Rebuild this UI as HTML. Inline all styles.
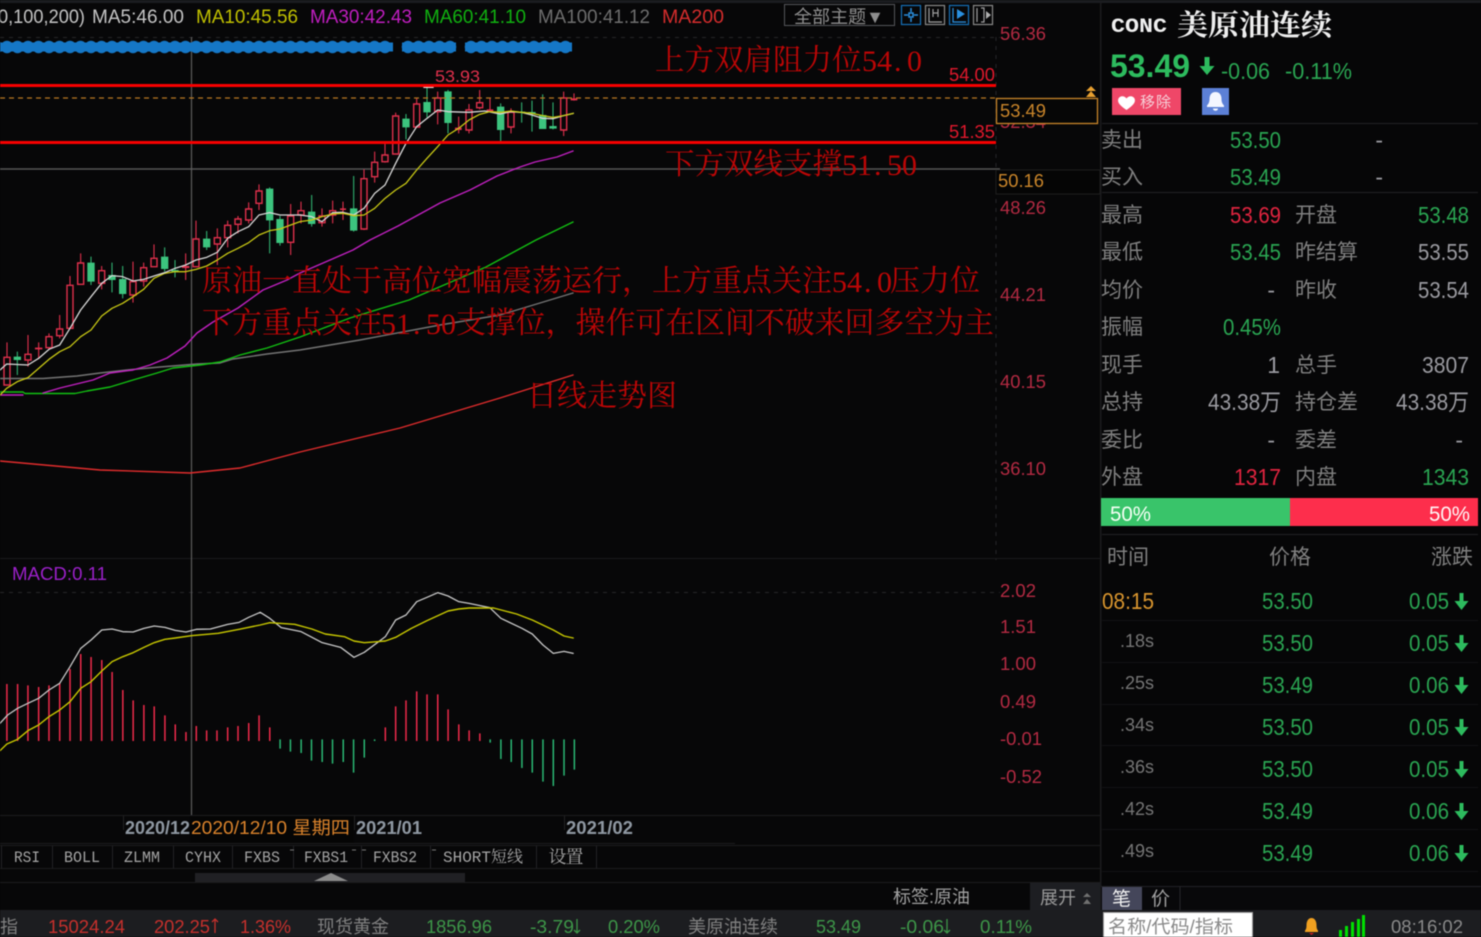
<!DOCTYPE html>
<html><head><meta charset="utf-8"><title>CONC</title>
<style>
html,body{margin:0;padding:0;background:#070708;width:1481px;height:937px;overflow:hidden}
svg{display:block;filter:blur(.4px)}
text{font-family:"Liberation Sans","Noto Sans CJK SC",sans-serif;white-space:pre}
.s{font-family:"Noto Serif CJK SC",serif;fill:#bb0606;font-size:29.5px}
.m{font-family:"Liberation Serif",serif;fill:#bb0606;font-size:30px}
.ax{font-size:18px;fill:#b32a42}
.rl{font-size:21px;fill:#7f7f7f}
.rv{font-size:23px;text-anchor:end}
.g{fill:#2aa552}.r{fill:#e0243f}.w{fill:#9a9aa0}
.tb{font-family:"Liberation Mono","Noto Serif CJK SC",monospace;font-size:16px;fill:#a5a5a5;text-anchor:middle}
.st{font-size:18px}
.hd{font-size:19px}
.nl{fill:none;stroke-linejoin:round;stroke-linecap:round}
.ns{vector-effect:non-scaling-stroke}
</style></head><body>
<svg width="1481" height="937" viewBox="0 0 1481 937" xmlns="http://www.w3.org/2000/svg">
<rect width="1481" height="937" fill="#070708"/>
<rect width="1481" height="3" fill="#1b1c20"/>

<!-- header legend -->
<text class="hd" x="-2" y="23" fill="#c4c4c4" textLength="87" lengthAdjust="spacingAndGlyphs">0,100,200)</text>
<text class="hd" x="92" y="23" fill="#c4c4c4" textLength="92" lengthAdjust="spacingAndGlyphs">MA5:46.00</text>
<text class="hd" x="196" y="23" fill="#c0c000" textLength="102" lengthAdjust="spacingAndGlyphs">MA10:45.56</text>
<text class="hd" x="310" y="23" fill="#c01ec0" textLength="102" lengthAdjust="spacingAndGlyphs">MA30:42.43</text>
<text class="hd" x="424" y="23" fill="#10b010" textLength="102" lengthAdjust="spacingAndGlyphs">MA60:41.10</text>
<text class="hd" x="538" y="23" fill="#6e6e6e" textLength="112" lengthAdjust="spacingAndGlyphs">MA100:41.12</text>
<text class="hd" x="662" y="23" fill="#d42c2c" textLength="62" lengthAdjust="spacingAndGlyphs">MA200</text>

<rect x="784.5" y="4.5" width="110" height="21" fill="none" stroke="#55565a"/>
<text x="794" y="23" font-size="18" fill="#8e8e8e" textLength="90" lengthAdjust="spacingAndGlyphs">全部主题▼</text>
<g fill="none" stroke-width="1.2">
<rect x="901.5" y="5.5" width="19" height="19" stroke="#1670b8"/>
<path d="M911 8v4M911 18v4M904 15h4M914 15h4M909 13h4v4h-4z" stroke="#2a90e0" stroke-width="1.5"/>
<rect x="925.5" y="5.5" width="19" height="19" stroke="#8a8a8a"/>
<path d="M929 8v14h13M933 9v8M938 9v8M933 13h5" stroke="#a0a0a0"/>
<rect x="949.5" y="5.5" width="19" height="19" stroke="#1670b8"/>
<path d="M953 8v14h13" stroke="#2a90e0"/><path d="M957 9l8 5-8 5z" fill="#2a90e0" stroke="none"/>
<rect x="973.5" y="5.5" width="19" height="19" stroke="#8a8a8a"/>
<path d="M977 8v14M981 8h3v14h-3" stroke="#a0a0a0"/><path d="M984 15h3M986 11l5 4-5 4z" fill="#b0b0b0" stroke="none"/>
</g>

<!-- grid -->
<path d="M0 37.5H1000M0 592.5H1000M996 37V560" stroke="#262628" stroke-dasharray="4 5" fill="none"/>
<path d="M0 558.5H1100" stroke="#1a1a1c"/>
<path d="M0 169H1000" stroke="#565656" stroke-width="1.4"/>
<path d="M191.5 37V815" stroke="#5c5c5c" stroke-width="1.2"/>

<!-- blue strip -->
<g fill="#1577c6">
<rect x="0" y="42.500" width="393" height="9"/><rect x="402" y="42.500" width="54" height="9"/><rect x="465" y="42.500" width="107" height="9"/>
</g>
<g fill="none" stroke="#1577c6" stroke-width="12.5" stroke-linecap="round" stroke-dasharray="0 10.5">
<path d="M-3.5 47H390"/><path d="M408 47H452"/><path d="M471 47H568"/>
</g>

<!-- candles left, zoom coordinates -->
<g transform="translate(0 80) scale(.33333)">
<path class="ns" stroke="#e0304c" stroke-width="1.1" fill="none" d="M21 787V915M84 765V860M116 787V835M147 760V810M179 705V775M210 588V745M242 520V615M305 558V628M399 545V668M431 548V620M462 493V560M557 520V600M588 422V560M652 445V555M683 422V502M714 408V460M746 367V430M777 313V390M872 372V525"/>
<path class="ns" stroke="#30b070" stroke-width="1.1" fill="none" d="M52 815V885M273 530V615M336 548V637M368 558V655M494 502V575M525 540V592M620 453V510M809 322V520M840 408V497"/>
<path class="ns" stroke="#e0304c" stroke-width="1.4" fill="#070708" d="M12 832H30V915H12ZM75 823H93V840H75ZM107 805H125V806H107ZM138 770H156V803H138ZM170 747H188V767H170ZM201 616H219V745H201ZM233 549H251V613H233ZM296 572H314V610H296ZM390 605H408V645H390ZM422 563H440V603H422ZM453 535H471V560H453ZM548 560H566V562H548ZM579 477H597V560H579ZM643 473H661V492H643ZM674 436H692V473H674ZM705 417H723V433H705ZM737 387H755V420H737ZM768 333H786V370H768ZM863 408H881V487H863Z"/>
<path fill="#3cc47e" d="M41 830H63V840H41ZM262 548H284V605H262ZM325 585H347V600H325ZM357 597H379V642H357ZM483 530H505V567H483ZM514 570H536V575H514ZM609 476H631V502H609ZM798 326H820V421H798ZM829 417H851V489H829Z"/>
</g>
<!-- candles right -->
<g transform="translate(300 80) scale(.33333)">
<path class="ns" stroke="#e0304c" stroke-width="1.1" fill="none" d="M3 365V430M66 385V440M98 362V430M129 365V420M192 268V450M224 215V308M255 190V248M287 98V223M350 55V142M413 35V133M476 110V160M507 72V160M539 30V88M570 55V95M633 85V160M791 35V168M822 40V62"/>
<path class="ns" stroke="#30b070" stroke-width="1.1" fill="none" d="M35 345V440M161 288V455M318 102V178M381 20V112M444 30V160M602 70V183M665 67V128M696 62V155M728 43V147M759 67V148"/>
<path class="ns" stroke="#e0304c" stroke-width="1.4" fill="#070708" d="M-6 392H12V405H-6ZM57 408H75V428H57ZM89 392H107V405H89ZM183 296H201V447H183ZM215 247H233V290H215ZM246 225H264V245H246ZM278 108H296V222H278ZM341 72H359V141H341ZM404 54H422V95H404ZM498 90H516V150H498ZM530 68H548V83H530ZM624 97H642V141H624ZM782 54H800V150H782Z"/>
<path fill="#e0304c" d="M120 385H138V390H120ZM465 143H485V150H465ZM560 88H580V94H560ZM812 55H832V61H812Z"/>
<path fill="#3cc47e" d="M24 395H46V432H24ZM150 385H172V452H150ZM307 116H329V142H307ZM370 66H392V97H370ZM433 34H455V129H433ZM591 80H613V150H591ZM654 95H676V98H654ZM685 96H707V100H685ZM717 105H739V147H717ZM748 138H770V146H748Z"/>
<path d="M370 21.5H401" class="ns" stroke="#ffffff" stroke-width="1.5"/>
</g>

<!-- MA lines -->
<path d="M0 461L100 470L190 473L240 468L300 452L400 428L500 398L573 375" class="nl" stroke="#e02c2c" stroke-width="1.4"/>
<path d="M0 378.5L43 378.5L77 376L100 373L127 370L160 367L197 364L220 363L233 359L267 354L300 350L360 340L440 325L500 315L540 303L573 293" class="nl" stroke="#747474" stroke-width="1.4"/>
<path d="M0 392L23 392L25 393.5L75 393.5L87 391L110 387L133 380L157 373L173 368L200 365L220 362L240 355L267 348L300 337L350 318L409 300L486 267L536 240L573 222" class="nl" stroke="#12c012" stroke-width="1.4"/>
<path d="M0 395L23 395M43 393L60 388L93 380L110 373L133 370L150 365L167 358L185 346L197 333L213 322L238 308L263 290L287 280L300 273L330 260L353 250L370 240L398 226L440 203L470 190L497 176L520 167L535 162L557 157L573 151" class="nl" stroke="#c020c0" stroke-width="1.4"/>
<g transform="translate(0 80) scale(.33333)">
<path class="nl ns" stroke="#c8c814" stroke-width="1.3" d="M0 945L20 925L52 905L84 893L116 865L147 838L179 815L210 800L242 770L273 750L305 708L336 685L368 670L399 650L431 628L462 595L494 580L525 575L557 575L588 568L620 558L652 540L683 520L714 505L746 488L777 465L809 452L840 447L872 435L900 425"/>
<path class="nl ns" stroke="#d8d8d8" stroke-width="1.3" d="M0 870L20 852L84 855L116 835L147 808L179 795L210 745L242 690L273 650L305 610L336 587L368 590L399 603L431 598L462 588L494 578L525 565L557 555L588 540L620 532L652 517L683 475L714 455L746 440L777 405L809 398L840 405L872 405L903 405"/>
</g>
<g transform="translate(300 80) scale(.33333)">
<path class="nl ns" stroke="#d8d8d8" stroke-width="1.3" d="M0 405L35 410L66 425L98 398L129 397L161 405L192 385L224 340L255 315L287 250L318 190L350 140L381 115L413 90L444 95L507 97L555 93L600 102L633 95L665 97L696 105L728 115L760 116L791 107L820 100"/>
<path class="nl ns" stroke="#c8c814" stroke-width="1.3" d="M0 425L35 420L66 410L98 402L129 400L161 407L192 405L224 385L255 355L287 330L318 310L350 270L381 235L413 200L444 165L476 145L507 120L539 103L570 95L602 97L633 93L665 97L696 100L728 107L759 112L791 107L820 100"/>
</g>

<!-- horizontal levels -->
<path d="M0 98H996" stroke="#b87822" stroke-dasharray="5 4" stroke-width="1.2"/>
<rect x="0" y="84" width="996" height="3" fill="#f70000"/>
<rect x="0" y="141" width="996" height="3" fill="#f70000"/>

<text x="435" y="82" font-size="17" fill="#e0304c" textLength="45" lengthAdjust="spacingAndGlyphs">53.93</text>
<text class="ax" x="949" y="81" textLength="46" lengthAdjust="spacingAndGlyphs" style="fill:#e0182c">54.00</text>
<text class="ax" x="949" y="138" textLength="46" lengthAdjust="spacingAndGlyphs" style="fill:#e0182c">51.35</text>

<!-- annotations -->
<text class="s" x="655" y="70">上方双肩阻力位</text>
<text class="m" x="862 877 894 907" y="71">54.0</text>
<text class="s" x="665" y="174">下方双线支撑</text>
<text class="m" x="842 857 874 887 902" y="175">51.50</text>
<text class="s" x="202" y="291" style="font-size:30px">原油一直处于高位宽幅震荡运行，上方重点关注</text>
<text class="m" x="832 847 864 877" y="292">54.0</text>
<text class="s" x="890" y="291" style="font-size:30px">压力位</text>
<text class="s" x="202" y="333" style="font-size:30px">下方重点关注</text>
<text class="m" x="381 396 413 426 441" y="334">51.50</text>
<text class="s" x="456" y="333" style="font-size:29.9px">支撑位，操作可在区间不破来回多空为主</text>
<text class="s" x="527" y="406" style="font-size:30px">日线走势图</text>

<!-- axis -->
<text class="ax" x="1000" y="40" textLength="46" lengthAdjust="spacingAndGlyphs">56.36</text>
<text class="ax" x="1000" y="128" textLength="46" lengthAdjust="spacingAndGlyphs">52.34</text>
<text class="ax" x="1000" y="214" textLength="46" lengthAdjust="spacingAndGlyphs">48.26</text>
<text class="ax" x="1000" y="301" textLength="46" lengthAdjust="spacingAndGlyphs">44.21</text>
<text class="ax" x="1000" y="388" textLength="46" lengthAdjust="spacingAndGlyphs">40.15</text>
<text class="ax" x="1000" y="475" textLength="46" lengthAdjust="spacingAndGlyphs">36.10</text>
<rect x="996" y="170" width="104" height="24" fill="#050505"/>
<rect x="996" y="170" width="104" height="24" fill="none" stroke="#1e1e1e"/>
<text x="998" y="187" font-size="18" fill="#c9852a" textLength="46" lengthAdjust="spacingAndGlyphs">50.16</text>
<rect x="996.5" y="98.5" width="101" height="25" fill="#060606" stroke="#c9852a" stroke-width="1.3"/>
<text x="1000" y="117" font-size="18" fill="#c9852a" textLength="46" lengthAdjust="spacingAndGlyphs">53.49</text>
<path d="M1091 86l5 5h-10zM1091 91l5 6h-10z" fill="#e8a030"/>

<!-- MACD -->
<text x="12" y="580" font-size="18" fill="#9a20c8" textLength="95" lengthAdjust="spacingAndGlyphs">MACD:0.11</text>
<text class="ax" x="1000" y="597" textLength="36" lengthAdjust="spacingAndGlyphs">2.02</text>
<text class="ax" x="1000" y="633" textLength="36" lengthAdjust="spacingAndGlyphs">1.51</text>
<text class="ax" x="1000" y="670" textLength="36" lengthAdjust="spacingAndGlyphs">1.00</text>
<text class="ax" x="1000" y="708" textLength="36" lengthAdjust="spacingAndGlyphs">0.49</text>
<text class="ax" x="1000" y="745" textLength="42" lengthAdjust="spacingAndGlyphs">-0.01</text>
<text class="ax" x="1000" y="783" textLength="42" lengthAdjust="spacingAndGlyphs">-0.52</text>
<g transform="translate(0 560) scale(.38265 .33333)">
<path class="ns" stroke="#ee2a4a" stroke-width="1.5" fill="none" d="M18 372V543M46 372V543M73 376V543M101 381V543M128 376V543M156 370V543M183 327V543M211 282V543M238 291V543M266 300V543M293 336V543M321 390V543M348 421V543M376 435V543M403 439V543M431 466V543M458 493V543M486 516V543M513 498V543M540 511V543M567 511V543M595 502V543M622 498V543M650 489V543M677 466V543M705 502V543M1007 502V543M1034 439V543M1061 421V543M1089 394V543M1116 403V543M1144 403V543M1171 448V543M1199 493V543M1226 511V543M1254 520V543"/>
<path class="ns" stroke="#2ab874" stroke-width="1.5" fill="none" d="M732 538V566M759 538V575M787 538V579M814 538V602M842 538V606M869 538V611M897 538V606M924 538V638M952 538V593M979 538V543M1281 538V548M1309 538V597M1336 538V606M1364 538V624M1391 538V638M1419 538V665M1446 538V678M1474 538V647M1501 538V629"/>
<path class="nl ns" stroke="#c8c8c8" stroke-width="1.3" d="M0 490L20 465L46 445L73 430L101 415L128 390L156 370L183 320L211 265L238 240L266 210L293 207L321 215L348 216L376 205L403 198L431 202L458 211L486 216L513 208L550 207L595 193L625 187L650 172L680 157L705 175L735 203L787 215L842 248L890 262L925 292L952 277L1007 230L1034 180L1061 165L1089 125L1116 112L1144 98L1171 108L1199 125L1226 130L1280 143L1309 175L1364 205L1391 222L1419 255L1446 280L1474 274L1498 280"/>
<path class="nl ns" stroke="#c8c800" stroke-width="1.4" d="M0 572L18 552L46 538L73 512L101 495L128 470L156 450L183 425L211 385L238 365L266 333L293 305L321 290L348 278L376 262L403 248L431 238L458 234L500 227L570 220L625 208L680 195L705 188L770 193L815 207L850 222L900 230L925 243L952 248L1007 243L1034 232L1075 205L1116 182L1171 153L1199 147L1226 144L1290 144L1350 162L1391 180L1446 210L1474 228L1498 234"/>
</g>

<!-- date axis -->
<path d="M0 815.5H1100M0 843.5H735" stroke="#1c1c1e"/>
<path d="M123.5 816V830M190.5 816V843M354.5 816V830M564.5 816V830" stroke="#222"/>
<text x="125" y="834" font-size="18" font-weight="bold" fill="#8f98a2" textLength="65" lengthAdjust="spacingAndGlyphs">2020/12</text>
<rect x="190" y="816" width="164" height="27" fill="#050505"/>
<text x="191" y="834" font-size="18" fill="#d9822b" textLength="159" lengthAdjust="spacingAndGlyphs">2020/12/10 星期四</text>
<text x="356" y="834" font-size="18" font-weight="bold" fill="#8f98a2" textLength="66" lengthAdjust="spacingAndGlyphs">2021/01</text>
<text x="566" y="834" font-size="18" font-weight="bold" fill="#8f98a2" textLength="67" lengthAdjust="spacingAndGlyphs">2021/02</text>

<!-- tabs -->
<rect x="0" y="845" width="1100" height="1" fill="#1c1c1e"/>
<rect x="0" y="868" width="1100" height="1" fill="#1c1c1e"/>
<path d="M1.5 846V868M52.5 846V868M112.5 846V868M173.5 846V868M232.5 846V868M293.5 846V868M361.5 846V868M430.5 846V868M536.5 846V868M596.5 846V868" stroke="#232326"/>
<text class="tb" x="27" y="862" textLength="26" lengthAdjust="spacingAndGlyphs">RSI</text>
<text class="tb" x="82" y="862" textLength="36" lengthAdjust="spacingAndGlyphs">BOLL</text>
<text class="tb" x="142" y="862" textLength="36" lengthAdjust="spacingAndGlyphs">ZLMM</text>
<text class="tb" x="203" y="862" textLength="36" lengthAdjust="spacingAndGlyphs">CYHX</text>
<text class="tb" x="262" y="862" textLength="36" lengthAdjust="spacingAndGlyphs">FXBS</text>
<text class="tb" x="326" y="862" textLength="44" lengthAdjust="spacingAndGlyphs">FXBS1</text>
<text class="tb" x="395" y="862" textLength="44" lengthAdjust="spacingAndGlyphs">FXBS2</text>
<text class="tb" x="483" y="862" textLength="80" lengthAdjust="spacingAndGlyphs">SHORT短线</text>
<text class="tb" x="566" y="863" style="font-size:18px" textLength="35">设置</text>
<path d="M290 850h4M352 850h4M362 850h4M432 850h4" stroke="#777"/>

<!-- scrollbar -->
<rect x="195" y="873" width="270" height="9" fill="#202024"/>
<path d="M314 881L331 873L348 881Z" fill="#8c8c8c"/>
<rect x="0" y="882" width="1100" height="1" fill="#1c1c1e"/>

<text x="893" y="903" font-size="18" fill="#a0a0a0" textLength="77" lengthAdjust="spacingAndGlyphs">标签:原油</text>
<rect x="1030" y="883" width="71" height="27" fill="#1d1e22"/>
<text x="1040" y="904" font-size="18" fill="#9a9a9a">展开</text>
<path d="M1087 893l4 4h-8zM1087 899l4 5h-8z" fill="#707070"/>

<!-- status bar -->
<rect x="0" y="910" width="1481" height="27" fill="#1c1d20"/>
<text class="st" x="0" y="933" fill="#808080">指</text>
<text class="st" x="48" y="933" fill="#c6302c" textLength="77" lengthAdjust="spacingAndGlyphs">15024.24</text>
<text class="st" x="154" y="933" fill="#c6302c" textLength="56" lengthAdjust="spacingAndGlyphs">202.25</text>
<path d="M215 919v14M212 922l3-3 3 3" stroke="#c6302c" fill="none" stroke-width="1.3"/>
<text class="st" x="240" y="933" fill="#c6302c" textLength="51" lengthAdjust="spacingAndGlyphs">1.36%</text>
<text class="st" x="317" y="933" fill="#808080" textLength="72">现货黄金</text>
<text class="st" x="426" y="933" fill="#3d9648" textLength="66" lengthAdjust="spacingAndGlyphs">1856.96</text>
<text class="st" x="530" y="933" fill="#3d9648" textLength="44" lengthAdjust="spacingAndGlyphs">-3.79</text>
<path d="M577 919v14M574 930l3 3 3-3" stroke="#3d9648" fill="none" stroke-width="1.3"/>
<text class="st" x="608" y="933" fill="#3d9648" textLength="52" lengthAdjust="spacingAndGlyphs">0.20%</text>
<text class="st" x="688" y="933" fill="#808080" textLength="90">美原油连续</text>
<text class="st" x="816" y="933" fill="#3d9648" textLength="45" lengthAdjust="spacingAndGlyphs">53.49</text>
<text class="st" x="900" y="933" fill="#3d9648" textLength="44" lengthAdjust="spacingAndGlyphs">-0.06</text>
<path d="M947 919v14M944 930l3 3 3-3" stroke="#3d9648" fill="none" stroke-width="1.3"/>
<text class="st" x="980" y="933" fill="#3d9648" textLength="52" lengthAdjust="spacingAndGlyphs">0.11%</text>

<!-- right panel -->
<rect x="1100" y="3" width="381" height="907" fill="#060607"/>
<rect x="1100" y="3" width="1.5" height="907" fill="#1b1b1d"/>
<text x="1111" y="32" font-size="20" font-weight="bold" fill="#f0f0f0" textLength="56" lengthAdjust="spacingAndGlyphs" style="font-family:'Liberation Mono',monospace">CONC</text>
<text x="1177" y="35" font-size="29" font-weight="bold" fill="#eeeeee" style="font-family:'Noto Serif CJK SC',serif" textLength="155" lengthAdjust="spacingAndGlyphs">美原油连续</text>
<text x="1110" y="77" font-size="32" font-weight="bold" fill="#2dbb5e" textLength="80" lengthAdjust="spacingAndGlyphs">53.49</text>
<path d="M1204.500 57h5v9h5l-7.500 9-7.500-9h5z" fill="#2dbb5e"/>
<text x="1221" y="79" font-size="23" fill="#2aa552" textLength="49" lengthAdjust="spacingAndGlyphs">-0.06</text>
<text x="1285" y="79" font-size="23" fill="#2aa552" textLength="67" lengthAdjust="spacingAndGlyphs">-0.11%</text>
<rect x="1112" y="88" width="69" height="27" fill="#ef4768"/>
<path d="M1126.500 110c-9-6-9-9-8-11.500 1.500-3 6-3 8 0 2-3 6.500-3 8 0 1 2.500 1 5.500-8 11.500z" fill="#fff"/>
<text x="1140" y="107" font-size="15" fill="#f6d0d8" textLength="31">移除</text>
<rect x="1202" y="88" width="27" height="27" fill="#5c80d6"/>
<path d="M1215.500 92c-4 0-6 3-6 7 0 3-1 5-2.500 6.500v1.500h17v-1.500c-1.500-1.500-2.500-3.500-2.500-6.500 0-4-2-7-6-7zM1213 108.500h5c0 3-5 3-5 0z" fill="#f4f6ff"/>

<path d="M1102 123.500H1478M1102 192.500H1478M1102 534.500H1478" stroke="#1e1e20" stroke-width="1.2"/>

<text class="rl" x="1101" y="147">卖出</text><text class="rv g" x="1281" y="148" textLength="51" lengthAdjust="spacingAndGlyphs">53.50</text><text class="rv w" x="1383" y="148">-</text>
<text class="rl" x="1101" y="184">买入</text><text class="rv g" x="1281" y="185" textLength="51" lengthAdjust="spacingAndGlyphs">53.49</text><text class="rv w" x="1383" y="185">-</text>
<text class="rl" x="1101" y="222">最高</text><text class="rv r" x="1281" y="223" textLength="51" lengthAdjust="spacingAndGlyphs">53.69</text><text class="rl" x="1295" y="222">开盘</text><text class="rv g" x="1469" y="223" textLength="51" lengthAdjust="spacingAndGlyphs">53.48</text>
<text class="rl" x="1101" y="259">最低</text><text class="rv g" x="1281" y="260" textLength="51" lengthAdjust="spacingAndGlyphs">53.45</text><text class="rl" x="1295" y="259">昨结算</text><text class="rv w" x="1469" y="260" textLength="51" lengthAdjust="spacingAndGlyphs">53.55</text>
<text class="rl" x="1101" y="297">均价</text><text class="rv w" x="1275" y="298">-</text><text class="rl" x="1295" y="297">昨收</text><text class="rv w" x="1469" y="298" textLength="51" lengthAdjust="spacingAndGlyphs">53.54</text>
<text class="rl" x="1101" y="334">振幅</text><text class="rv g" x="1281" y="335" textLength="58" lengthAdjust="spacingAndGlyphs">0.45%</text>
<text class="rl" x="1101" y="372">现手</text><text class="rv w" x="1280" y="373">1</text><text class="rl" x="1295" y="372">总手</text><text class="rv w" x="1469" y="373" textLength="47" lengthAdjust="spacingAndGlyphs">3807</text>
<text class="rl" x="1101" y="409">总持</text><text class="rv w" x="1281" y="410" textLength="73" lengthAdjust="spacingAndGlyphs">43.38万</text><text class="rl" x="1295" y="409">持仓差</text><text class="rv w" x="1469" y="410" textLength="73" lengthAdjust="spacingAndGlyphs">43.38万</text>
<text class="rl" x="1101" y="447">委比</text><text class="rv w" x="1275" y="448">-</text><text class="rl" x="1295" y="447">委差</text><text class="rv w" x="1463" y="448">-</text>
<text class="rl" x="1101" y="484">外盘</text><text class="rv r" x="1281" y="485" textLength="47" lengthAdjust="spacingAndGlyphs">1317</text><text class="rl" x="1295" y="484">内盘</text><text class="rv g" x="1469" y="485" textLength="47" lengthAdjust="spacingAndGlyphs">1343</text>

<rect x="1101" y="498" width="189" height="28" fill="#39c46a"/>
<rect x="1290" y="498" width="188" height="28" fill="#fd2e4c"/>
<text x="1110" y="521" font-size="21" fill="#f4fff4" textLength="41" lengthAdjust="spacingAndGlyphs">50%</text>
<text x="1470" y="521" font-size="21" fill="#fff4f4" text-anchor="end" textLength="41" lengthAdjust="spacingAndGlyphs">50%</text>

<text class="rl" x="1107" y="564">时间</text><text class="rl" x="1269" y="564">价格</text><text class="rl" x="1431" y="564">涨跌</text>
<path d="M1102 620.500H1478M1102 662.500H1478M1102 704.500H1478M1102 745.500H1478M1102 787.500H1478M1102 829.500H1478M1102 871.500H1478" stroke="#121214"/>
<text x="1102" y="609" font-size="23" fill="#d9952e" textLength="52" lengthAdjust="spacingAndGlyphs">08:15</text>
<g font-size="18" fill="#757575">
<text x="1120" y="647">.18s</text><text x="1120" y="689">.25s</text><text x="1120" y="731">.34s</text><text x="1120" y="773">.36s</text><text x="1120" y="815">.42s</text><text x="1120" y="857">.49s</text>
</g>
<text class="rv g" x="1313" y="609" textLength="51" lengthAdjust="spacingAndGlyphs">53.50</text><text class="rv g" x="1449" y="609" textLength="40" lengthAdjust="spacingAndGlyphs">0.05</text>
<text class="rv g" x="1313" y="651" textLength="51" lengthAdjust="spacingAndGlyphs">53.50</text><text class="rv g" x="1449" y="651" textLength="40" lengthAdjust="spacingAndGlyphs">0.05</text>
<text class="rv g" x="1313" y="693" textLength="51" lengthAdjust="spacingAndGlyphs">53.49</text><text class="rv g" x="1449" y="693" textLength="40" lengthAdjust="spacingAndGlyphs">0.06</text>
<text class="rv g" x="1313" y="735" textLength="51" lengthAdjust="spacingAndGlyphs">53.50</text><text class="rv g" x="1449" y="735" textLength="40" lengthAdjust="spacingAndGlyphs">0.05</text>
<text class="rv g" x="1313" y="777" textLength="51" lengthAdjust="spacingAndGlyphs">53.50</text><text class="rv g" x="1449" y="777" textLength="40" lengthAdjust="spacingAndGlyphs">0.05</text>
<text class="rv g" x="1313" y="819" textLength="51" lengthAdjust="spacingAndGlyphs">53.49</text><text class="rv g" x="1449" y="819" textLength="40" lengthAdjust="spacingAndGlyphs">0.06</text>
<text class="rv g" x="1313" y="861" textLength="51" lengthAdjust="spacingAndGlyphs">53.49</text><text class="rv g" x="1449" y="861" textLength="40" lengthAdjust="spacingAndGlyphs">0.06</text>
<g fill="#2dbb5e">
<path d="M1459.500 593h4v8h5l-7 9-7-9h5z"/>
<path d="M1459.500 635h4v8h5l-7 9-7-9h5z"/>
<path d="M1459.500 677h4v8h5l-7 9-7-9h5z"/>
<path d="M1459.500 719h4v8h5l-7 9-7-9h5z"/>
<path d="M1459.500 761h4v8h5l-7 9-7-9h5z"/>
<path d="M1459.500 803h4v8h5l-7 9-7-9h5z"/>
<path d="M1459.500 845h4v8h5l-7 9-7-9h5z"/>
</g>

<rect x="1101" y="886" width="380" height="24" fill="#08080a"/>
<rect x="1101" y="886" width="380" height="1" fill="#222226"/>
<rect x="1102" y="887" width="40" height="23" fill="#44465a"/>
<text x="1112" y="905" font-size="19" fill="#f0f0f0">笔</text>
<text x="1151" y="905" font-size="19" fill="#a0a0a0">价</text>
<path d="M1180 887V910" stroke="#26262a"/>

<rect x="1103" y="912" width="150" height="25" fill="#ffffff"/>
<rect x="1103.500" y="912.500" width="149" height="25" fill="none" stroke="#a0a0a0"/>
<text x="1108" y="933" font-size="18" fill="#8a8a8a" textLength="125" lengthAdjust="spacingAndGlyphs">名称/代码/指标</text>

<path d="M1311.500 918c-3 0-5 3-5 7 0 3-.5 4.500-1.500 5.500v1.500h13v-1.500c-1-1-1.500-2.500-1.500-5.500 0-4-2-7-5-7z" fill="#f0a020"/>
<path d="M1309 933h5l-2.500 2z" fill="#d02020"/>
<g fill="#00e000">
<rect x="1339" y="930" width="3" height="7"/><rect x="1345" y="926" width="3" height="11"/><rect x="1351" y="922" width="3" height="15"/><rect x="1357" y="919" width="3" height="18"/><rect x="1362" y="915" width="3" height="22"/>
</g>
<text x="1391" y="933" font-size="18" fill="#8a8a8a" textLength="72" lengthAdjust="spacingAndGlyphs">08:16:02</text>
</svg>
</body></html>
